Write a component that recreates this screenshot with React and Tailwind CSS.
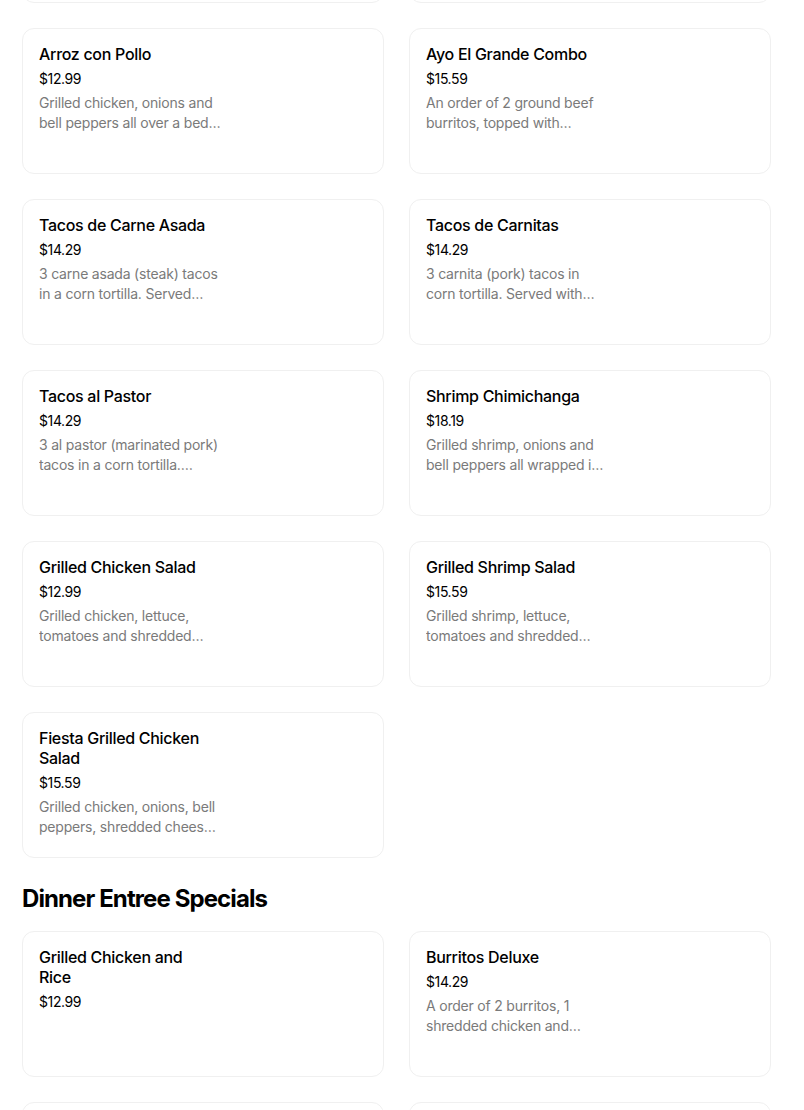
import React from "react";

const sections = [
  {
    title: null,
    items: [
      { name: "Arroz con Pollo", price: "$12.99", desc: "Grilled chicken, onions and bell peppers all over a bed of rice, topped with cheese sauce." },
      { name: "Ayo El Grande Combo", price: "$15.59", desc: "An order of 2 ground beef burritos, topped with cheese sauce and served with rice." },
      { name: "Tacos de Carne Asada", price: "$14.29", desc: "3 carne asada (steak) tacos in a corn tortilla. Served with rice and beans." },
      { name: "Tacos de Carnitas", price: "$14.29", desc: "3 carnita (pork) tacos in corn tortilla. Served with rice and beans." },
      { name: "Tacos al Pastor", price: "$14.29", desc: "3 al pastor (marinated pork) tacos in a corn tortilla. Served with rice and beans." },
      { name: "Shrimp Chimichanga", price: "$18.19", desc: "Grilled shrimp, onions and bell peppers all wrapped in a flour tortilla." },
      { name: "Grilled Chicken Salad", price: "$12.99", desc: "Grilled chicken, lettuce, tomatoes and shredded cheese." },
      { name: "Grilled Shrimp Salad", price: "$15.59", desc: "Grilled shrimp, lettuce, tomatoes and shredded cheese." },
      { name: "Fiesta Grilled Chicken Salad", price: "$15.59", desc: "Grilled chicken, onions, bell peppers, shredded cheese and sour cream." },
    ],
  },
  {
    title: "Dinner Entree Specials",
    items: [
      { name: "Grilled Chicken and Rice", price: "$12.99", desc: "" },
      { name: "Burritos Deluxe", price: "$14.29", desc: "A order of 2 burritos, 1 shredded chicken and bean, 1 ground beef and bean." },
      { name: "Enchiladas Supremas", price: "$14.29", desc: "4 enchiladas: chicken, beef, cheese and bean." },
      { name: "Fajitas Texanas", price: "$18.19", desc: "Steak, chicken and shrimp with onions and peppers." },
    ],
  },
];

const ItemCard = ({ item }) => (
  <div className="h-[146px] bg-white rounded-[12px] border border-[#f0f0f0] px-4 pt-[15px]">
    {item && (
      <div className="w-[182px]">
        <h3 className="w-[172px] text-[16px] leading-5 font-medium tracking-[-0.3px] text-black">{item.name}</h3>
        <p className="mt-[5px] text-[14px] leading-5 tracking-[-0.4px] text-black">{item.price}</p>
        {item.desc && (
          <p className="mt-1 text-[14px] leading-5 tracking-[-0.2px] text-[#7a7a7a] line-clamp-2">{item.desc}</p>
        )}
      </div>
    )}
  </div>
);

export default function App() {
  return (
    <div className="w-[804px] h-[1110px] overflow-hidden bg-white" style={{ fontFamily: "Inter, 'Noto Sans', sans-serif" }}>
      <div className="mt-[-143px] ml-[22px] w-[749px]">
        {/* row scrolled above the top edge */}
        <div className="grid grid-cols-2 gap-x-[25px] mb-[25px]">
          <ItemCard item={null} />
          <ItemCard item={null} />
        </div>
        {sections.map((section, i) => (
          <div key={i}>
            {section.title && (
              <h2 className="mt-[25px] mb-[16px] text-[24px] leading-8 font-bold tracking-[-0.9px] text-black">
                {section.title}
              </h2>
            )}
            <div className="grid grid-cols-2 gap-x-[25px] gap-y-[25px]">
              {section.items.map((item) => (
                <ItemCard key={item.name} item={item} />
              ))}
            </div>
          </div>
        ))}
      </div>
    </div>
  );
}
